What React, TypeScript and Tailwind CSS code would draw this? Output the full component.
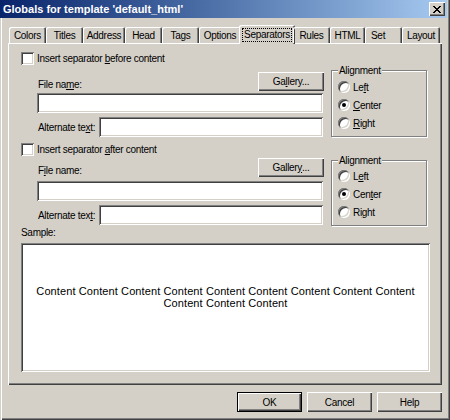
const sunken =
  'bg-white shadow-[inset_1px_1px_0_#808080,inset_-1px_-1px_0_#fff,inset_2px_2px_0_#404040,inset_-2px_-2px_0_#d4d0c8]';
const raised =
  'bg-[#d4d0c8] shadow-[inset_1px_1px_0_#fff,inset_-1px_-1px_0_#404040,inset_-2px_-2px_0_#808080]';

const tabs = [
  { label: 'Colors', cls: 'w-[37px]' },
  { label: 'Titles', cls: 'w-[37px]' },
  { label: 'Address', cls: 'w-[42px]' },
  { label: 'Head', cls: 'w-[37px]' },
  { label: 'Tags', cls: 'w-[37px]' },
  { label: 'Options', cls: 'w-[42px]' },
  { label: 'Separators', cls: 'w-[56px]', active: true },
  { label: 'Rules', cls: 'w-[37px]' },
  { label: 'HTML', cls: 'w-[35px]' },
  { label: 'Set', cls: 'w-[37px] justify-start pl-[6px]' },
  { label: 'Layout', cls: 'w-[38px]' },
];

const CloseGlyph = () => (
  <svg width="8" height="7" viewBox="0 0 8 7" shapeRendering="crispEdges">
    <path
      fill="#000"
      d="M0 0h2v1H0zM6 0h2v1H6zM1 1h2v1H1zM5 1h2v1H5zM2 2h4v1H2zM3 3h2v1H3zM2 4h4v1H2zM1 5h2v1H1zM5 5h2v1H5zM0 6h2v1H0zM6 6h2v1H6z"
    />
  </svg>
);

const Checkbox = () => <div className={`w-[13px] h-[13px] shrink-0 ${sunken}`} />;

const Radio = ({ checked, children }: { checked?: boolean; children: React.ReactNode }) => (
  <div className="flex items-center h-[12px]">
    <div className="w-[12px] h-[12px] shrink-0 rounded-full flex items-center justify-center bg-white shadow-[inset_1px_1px_0_#808080,inset_-1px_-1px_0_#fff,inset_2px_2px_0_#404040,inset_-2px_-2px_0_#d4d0c8]">
      {checked && <div className="w-[4px] h-[4px] rounded-full bg-black" />}
    </div>
    <span className="ml-[3px] leading-[13px]">{children}</span>
  </div>
);

type SectionProps = {
  check: React.ReactNode;
  file: React.ReactNode;
  alt: React.ReactNode;
  gallery: React.ReactNode;
  radios: React.ReactNode[];
  first?: boolean;
};

const Section = ({ check, file, alt, gallery, radios, first }: SectionProps) => (
  <div className={first ? '' : 'mt-[6px]'}>
    <div className="flex items-center h-[13px]">
      <Checkbox />
      <span className="ml-[3px] leading-[13px]">{check}</span>
    </div>
    <div className={`flex items-start ${first ? 'mt-[5px]' : 'mt-[2px]'}`}>
      <div className={`ml-[16px] w-[287px] shrink-0 ${first ? 'pt-[2px]' : ''}`}>
        <div className="flex h-[19px]">
          <span className="self-end leading-[13px] pl-[1px]">{file}</span>
          <div className={`ml-auto w-[66px] h-[19px] flex items-center justify-center ${raised}`}>{gallery}</div>
        </div>
        <div className={`w-[286px] h-[20px] ${first ? 'mt-[2px]' : 'mt-[4px]'} ${sunken}`} />
        <div className="flex items-center mt-[4px]">
          <span className="w-[62px] shrink-0 pl-[1px] leading-[13px]">{alt}</span>
          <div className={`w-[224px] h-[20px] ${sunken}`} />
        </div>
      </div>
      <div
        className={`relative ml-[7px] w-[96px] shrink-0 border border-[#808080] shadow-[inset_1px_1px_0_#fff,1px_1px_0_#fff] ${
          first ? 'h-[67px] pt-[10px]' : 'mt-[2px] h-[66px] pt-[9px]'
        }`}
      >
        <span className="absolute -top-[7px] left-[6px] px-[1px] bg-[#d4d0c8] leading-[13px]">Alignment</span>
        <div className="flex flex-col gap-[6px] pl-[6px]">
          <Radio>{radios[0]}</Radio>
          <Radio checked>{radios[1]}</Radio>
          <Radio>{radios[2]}</Radio>
        </div>
      </div>
    </div>
  </div>
);

const U = ({ children }: { children: React.ReactNode }) => (
  <span className="underline underline-offset-[1px]">{children}</span>
);

export default function App() {
  return (
    <div className="w-[450px] h-[420px] bg-[#d4d0c8] overflow-hidden whitespace-nowrap text-black text-[10px] tracking-[-0.3px] font-['Liberation_Sans',Arial,sans-serif] shadow-[inset_1px_0_0_#d4d0c8,inset_2px_0_0_#fff,inset_-1px_-1px_0_#404040,inset_-2px_-2px_0_#808080]">
      {/* title bar */}
      <div className="w-[447px] h-[18px] flex items-start bg-gradient-to-r from-[#0a246a] to-[#a6caf0]">
        <span className="pl-[3px] pt-[2px] leading-[14px] text-[11px] text-white font-bold tracking-normal">
          Globals for template 'default_html'
        </span>
        <div className={`ml-auto mr-[2px] mt-[2px] w-[16px] h-[14px] flex items-center justify-center ${raised}`}>
          <CloseGlyph />
        </div>
      </div>

      {/* tabs */}
      <div className="relative z-10 mt-[7px] pl-[9px] h-[18px] flex items-end">
        {tabs.map((t) =>
          t.active ? (
            <div
              key={t.label}
              className={`-mx-[2px] h-[19px] -mb-[1px] flex items-start justify-center pt-[3px] bg-[#d4d0c8] rounded-tl-[2px] rounded-tr-[2px] shadow-[inset_1px_1px_0_#fff,inset_-1px_0_0_#404040,inset_-2px_0_0_#808080] ${t.cls}`}
            >
              <span className="border border-dotted border-black px-[1px] leading-[12px]">{t.label}</span>
            </div>
          ) : (
            <div
              key={t.label}
              className={`h-[16px] flex items-center justify-center leading-[13px] rounded-tl-[2px] rounded-tr-[2px] shadow-[inset_1px_1px_0_#fff,inset_-1px_0_0_#404040,inset_-2px_0_0_#808080] ${t.cls}`}
            >
              {t.label}
            </div>
          )
        )}
      </div>

      {/* panel */}
      <div className="ml-[8px] w-[434px] h-[342px] pl-[13px] pt-[9px] shadow-[inset_1px_1px_0_#fff,inset_-1px_-1px_0_#404040,inset_-2px_-2px_0_#808080]">
        <Section
          first
          check={<>Insert separator <U>b</U>efore content</>}
          file={<>File na<U>m</U>e:</>}
          alt={<>Alternate te<U>x</U>t:</>}
          gallery={<>Ga<U>l</U>lery...</>}
          radios={[<>Le<U>f</U>t</>, <><U>C</U>enter</>, <><U>R</U>ight</>]}
        />
        <Section
          check={<>Insert separator <U>a</U>fter content</>}
          file={<>F<U>i</U>le name:</>}
          alt={<>Alternate tex<U>t</U>:</>}
          gallery={<>Galler<U>y</U>...</>}
          radios={[<>L<U>e</U>ft</>, <>Cen<U>t</U>er</>, <>Ri<U>g</U>ht</>]}
        />
        <div className="h-[13px] leading-[13px]">Sample:</div>
        <div className={`mt-[4px] w-[409px] h-[129px] pt-[42px] text-center text-[11px] tracking-[0.1px] leading-[12px] ${sunken}`}>
          Content Content Content Content Content Content Content Content Content
          <br />
          Content Content Content
        </div>
      </div>

      {/* buttons */}
      <div className="mt-[7px] pr-[8px] flex justify-end gap-[5px]">
        <div className="w-[65px] h-[20px] flex border border-black">
          <div className={`flex-1 flex items-center justify-center ${raised}`}>OK</div>
        </div>
        <div className={`w-[65px] h-[20px] flex items-center justify-center ${raised}`}>Cancel</div>
        <div className={`w-[65px] h-[20px] flex items-center justify-center ${raised}`}>Help</div>
      </div>
    </div>
  );
}
